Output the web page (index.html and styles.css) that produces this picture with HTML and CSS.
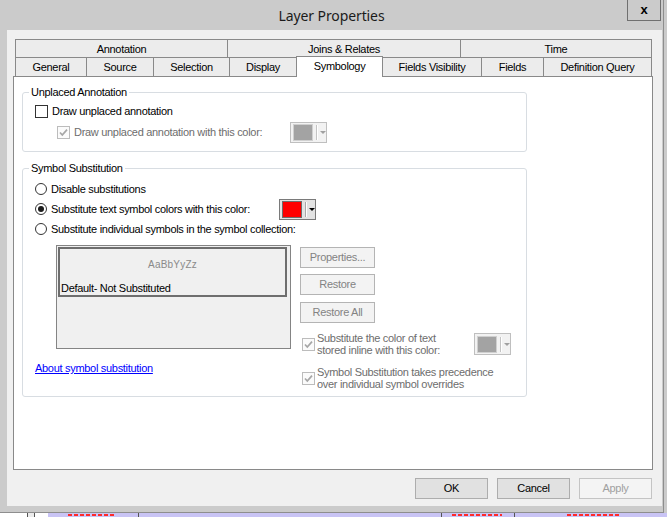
FILE: index.html
```html
<!DOCTYPE html>
<html>
<head>
<meta charset="utf-8">
<title>Layer Properties</title>
<link rel="stylesheet" href="styles.css">
</head>
<body>
<div class="window">
  <div class="titlebar">
    <div></div>
    <div class="title">Layer Properties</div>
    <div class="tb-right"><div class="close">x</div></div>
  </div>
  <div class="client">
    <div class="tabs">
      <div class="tabrow row1">
        <div class="tab t-annotation">Annotation</div>
        <div class="tab t-joins">Joins &amp; Relates</div>
        <div class="tab t-time">Time</div>
      </div>
      <div class="tabrow row2">
        <div class="tab t-general">General</div>
        <div class="tab t-source">Source</div>
        <div class="tab t-selection">Selection</div>
        <div class="tab t-display">Display</div>
        <div class="tab t-symbology sel">Symbology</div>
        <div class="tab t-fieldsvis">Fields Visibility</div>
        <div class="tab t-fields">Fields</div>
        <div class="tab t-defquery">Definition Query</div>
      </div>
    </div>
    <div class="panel">
      <fieldset class="group g1">
        <legend>Unplaced Annotation</legend>
        <div class="row r-draw">
          <span class="cb"></span><span class="lbl">Draw unplaced annotation</span>
        </div>
        <div class="row r-drawcolor">
          <span class="cb dis"><svg width="11" height="11" viewBox="0 0 11 11"><path d="M2 5.5 L4.3 8 L9 2.6" fill="none" stroke="#a6a6a6" stroke-width="1.7"/></svg></span>
          <span class="lbl dis w-drawcolor">Draw unplaced annotation with this color:</span>
          <span class="colorbtn dis"><span class="swatch gray"></span><span class="sep"></span><span class="arrow"></span></span>
        </div>
      </fieldset>
      <fieldset class="group g2">
        <legend>Symbol Substitution</legend>
        <div class="row rr">
          <span class="radio"></span><span class="lbl">Disable substitutions</span>
        </div>
        <div class="row rr">
          <span class="radio on"></span><span class="lbl w-subtext">Substitute text symbol colors with this color:</span>
          <span class="colorbtn"><span class="swatch red"></span><span class="sep"></span><span class="arrow"></span></span>
        </div>
        <div class="row rr">
          <span class="radio"></span><span class="lbl">Substitute individual symbols in the symbol collection:</span>
        </div>
        <div class="subst">
          <div class="leftcol">
            <div class="listbox">
              <div class="item">
                <div class="sample">AaBbYyZz</div>
                <div class="itemname">Default- Not Substituted</div>
              </div>
            </div>
            <a class="link" href="#">About symbol substitution</a>
          </div>
          <div class="rightcol">
            <div class="btn dis b-props">Properties...</div>
            <div class="btn dis b-restore">Restore</div>
            <div class="btn dis b-restoreall">Restore All</div>
            <div class="chkrow row-a">
              <span class="cb dis"><svg width="11" height="11" viewBox="0 0 11 11"><path d="M2 5.5 L4.3 8 L9 2.6" fill="none" stroke="#a6a6a6" stroke-width="1.7"/></svg></span>
              <span class="lbl2 dis w-inline">Substitute the color of text<br>stored inline with this color:</span>
              <span class="colorbtn dis tall"><span class="swatch gray"></span><span class="sep"></span><span class="arrow"></span></span>
            </div>
            <div class="chkrow row-b">
              <span class="cb dis"><svg width="11" height="11" viewBox="0 0 11 11"><path d="M2 5.5 L4.3 8 L9 2.6" fill="none" stroke="#a6a6a6" stroke-width="1.7"/></svg></span>
              <span class="lbl2 dis">Symbol Substitution takes precedence<br>over individual symbol overrides</span>
            </div>
          </div>
        </div>
      </fieldset>
    </div>
    <div class="footer">
      <div class="dbtn">OK</div>
      <div class="dbtn">Cancel</div>
      <div class="dbtn off">Apply</div>
    </div>
  </div>
</div>
<div class="strip">
  <span class="s-white s-w27"></span>
  <span class="s-line"></span>
  <span class="s-light"></span>
  <span class="s-line"></span>
  <span class="s-white s-w13"></span>
  <span class="s-lav">
    <span class="redmark m1"></span>
    <span class="tick t1"></span>
    <span class="tick t2"></span>
    <span class="redmark m2"></span>
    <span class="tick t3"></span>
    <span class="redmark m3"></span>
  </span>
</div>
</body>
</html>
```
FILE: styles.css
```css
* { box-sizing: border-box; }
html, body { margin: 0; padding: 0; }
body {
  width: 667px; height: 517px; overflow: hidden;
  background: #cbcbcb;
  font-family: "Liberation Sans", Arial, sans-serif;
  font-size: 11px; letter-spacing: -0.3px; color: #000;
}
.window {
  width: 664px; height: 513px;
  background: #cbcbcb;
  border-right: 1px solid #8e8e8e;
  border-bottom: 1px solid #8e8e8e;
  display: flex; flex-direction: column;
}
.titlebar {
  height: 30px; flex: none;
  display: grid; grid-template-columns: 1fr auto 1fr;
}
.title {
  font-family: "Noto Sans", "Open Sans", sans-serif;
  font-size: 14px; letter-spacing: -0.1px;
  line-height: 31px; color: #1b1b1b;
}
.tb-right { display: flex; justify-content: flex-end; align-items: flex-start; padding-right: 2px; }
.close {
  width: 34px; height: 21px;
  border: 1px solid #707070; border-top: none;
  font-weight: bold; font-size: 13px; letter-spacing: 0;
  text-align: center; line-height: 19px;
}
.client {
  height: 476px; flex: none;
  margin-left: 7px; margin-right: 1px;
  background: #f0f0f0;
  padding-top: 9px;
  display: flex; flex-direction: column;
}
/* tabs */
.tabs { margin-left: 8px; width: 637px; }
.tabrow { display: flex; }
.tab {
  flex: none; height: 19px;
  border: 1px solid #898989; background: #ececec;
  margin-left: -1px;
  text-align: center; line-height: 18px;
  white-space: nowrap;
}
.tab:first-child { margin-left: 0; }
.row2 { margin-top: -1px; align-items: flex-end; }
.row2 .tab { border-bottom: none; line-height: 18px; }
.row2 .tab.sel {
  background: #fff; height: 21px;
  margin-top: -1px; margin-bottom: -1px;
  position: relative; z-index: 1;
}
.t-annotation { width: 213px; }
.t-joins { width: 234px; }
.t-time { width: 192px; }
.t-general { width: 72px; }
.t-source { width: 68px; }
.t-selection { width: 77px; }
.t-display { width: 68px; }
.t-symbology { width: 87px; }
.t-fieldsvis { width: 100px; }
.t-fields { width: 63px; }
.t-defquery { width: 109px; }
/* panel */
.panel {
  margin-left: 6px; width: 640px; height: 394px; flex: none;
  background: #fff; border: 1px solid #898989;
  padding: 9px 0 0 8px;
}
fieldset.group {
  margin: 0; padding: 0; min-width: 0;
  width: 505px;
  border: 1px solid #d8dde2; border-radius: 3px;
}
fieldset.group legend {
  margin-left: 6px; padding: 0 2px;
  line-height: 13px; height: 13px;
}
fieldset.g1 { padding: 2px 0 8px 0; }
fieldset.g2 { margin-top: 10px; padding: 4px 0 6px 0; }
.row { display: flex; align-items: center; }
.g1 .row { height: 21px; }
.r-draw { padding-left: 12px; }
.r-drawcolor { padding-left: 34px; }
.rr { height: 20px; padding-left: 12px; }
.lbl { margin-left: 4px; white-space: nowrap; line-height: 13px; }
.dis { color: #6d6d6d; }
.w-drawcolor { width: 216px; }
.w-subtext { width: 228px; }
/* checkbox / radio */
.cb {
  flex: none; width: 13px; height: 13px;
  border: 1px solid #333; background: #fff;
  display: flex; align-items: center; justify-content: center;
}
.cb.dis { border-color: #bcbcbc; background: #fbfbfb; }
.radio {
  flex: none; width: 12px; height: 12px;
  border: 1px solid #333; border-radius: 50%; background: #fff;
  display: flex; align-items: center; justify-content: center;
}
.radio.on::after {
  content: ""; width: 6px; height: 6px; border-radius: 50%; background: #1c1c1c;
}
/* colour button */
.colorbtn {
  flex: none; width: 37px; height: 21px;
  border: 1px solid #7a7a7a; background: #e3e3e3;
  display: flex; align-items: center; padding-left: 2px;
}
.colorbtn.tall { height: 22px; }
.swatch { width: 21px; height: 17px; border: 1px solid #6e6e6e; }
.swatch.red { background: #ff0000; }
.swatch.gray { background: #a3a3a3; border-color: #d0d0d0; }
.sep { width: 2px; height: 15px; border-left: 1px solid #a8a8a8; border-right: 1px solid #fff; margin-left: 3px; }
.arrow {
  width: 0; height: 0; margin-left: 2px;
  border-left: 3px solid transparent; border-right: 3px solid transparent;
  border-top: 3px solid #000;
}
.colorbtn.dis { border-color: #bfbfbf; background: #f2f2f2; }
.colorbtn.dis .arrow { border-top-color: #a0a0a0; }
.colorbtn.dis .sep { border-left-color: #c4c4c4; }
/* substitution area */
.subst { display: flex; margin-top: 6px; }
.leftcol { margin-left: 12px; width: 256px; display: flex; flex-direction: column; }
.listbox {
  margin-left: 21px; width: 235px; height: 104px;
  border: 1px solid #848484; background: #f0f0f0;
  padding: 1px;
}
.item {
  width: 229px; height: 50px;
  border: 2px solid #6e6e6e;
}
.sample {
  text-align: center; font-size: 10px; letter-spacing: 0.2px;
  color: #8a8a8a; line-height: 12px; margin-top: 10px;
}
.itemname { margin-top: 11px; padding-left: 1px; line-height: 13px; }
.link {
  margin-top: 13px; line-height: 13px;
  color: #0000ff; text-decoration: underline;
  align-self: flex-start;
}
.rightcol { margin-left: 9px; width: 215px; display: flex; flex-direction: column; }
.btn {
  width: 75px; height: 21px;
  border: 1px solid #b4b4b4; background: #f3f3f3;
  text-align: center; line-height: 19px;
}
.btn.dis { color: #838383; }
.b-props { margin-top: 2px; }
.b-restore { margin-top: 6px; }
.b-restoreall { margin-top: 7px; }
.chkrow { display: flex; align-items: center; height: 24px; padding-left: 2px; }
.row-a { margin-top: 9px; }
.row-b { margin-top: 10px; }
.lbl2 { margin-left: 2px; line-height: 12px; white-space: nowrap; }
.w-inline { width: 157px; }
/* footer */
.footer {
  margin-top: 8px; padding-right: 10px;
  display: flex; justify-content: flex-end; gap: 9px;
}
.dbtn {
  width: 73px; height: 21px;
  border: 1px solid #adadad; background: #e1e1e1;
  text-align: center; line-height: 19px;
}
.dbtn.off { background: #f4f4f4; border-color: #c4c4c4; color: #a0a0a0; }
/* background strip */
.strip { height: 4px; display: flex; overflow: hidden; }
.strip > span { display: block; height: 4px; flex: none; }
.s-white { background: #fff; }
.s-w27 { width: 27px; }
.s-w13 { width: 13px; }
.s-line { width: 1px; background: #555; }
.s-light { width: 6px; background: #ececec; }
.strip > .s-lav { flex: 1; background: #c9c4f5; display: flex; }
.redmark {
  display: block; flex: none; height: 2px; margin-top: 1px;
  background: repeating-linear-gradient(90deg, #ff2a2a 0 4px, transparent 4px 6px);
}
.tick { display: block; width: 1px; height: 4px; background: #555; flex: none; }
.m1 { margin-left: 20px; width: 48px; }
.t1 { margin-left: 22px; }
.t2 { margin-left: 302px; }
.m2 { margin-left: 10px; width: 50px; }
.t3 { margin-left: 12px; }
.m3 { margin-left: 52px; width: 52px; }
```
